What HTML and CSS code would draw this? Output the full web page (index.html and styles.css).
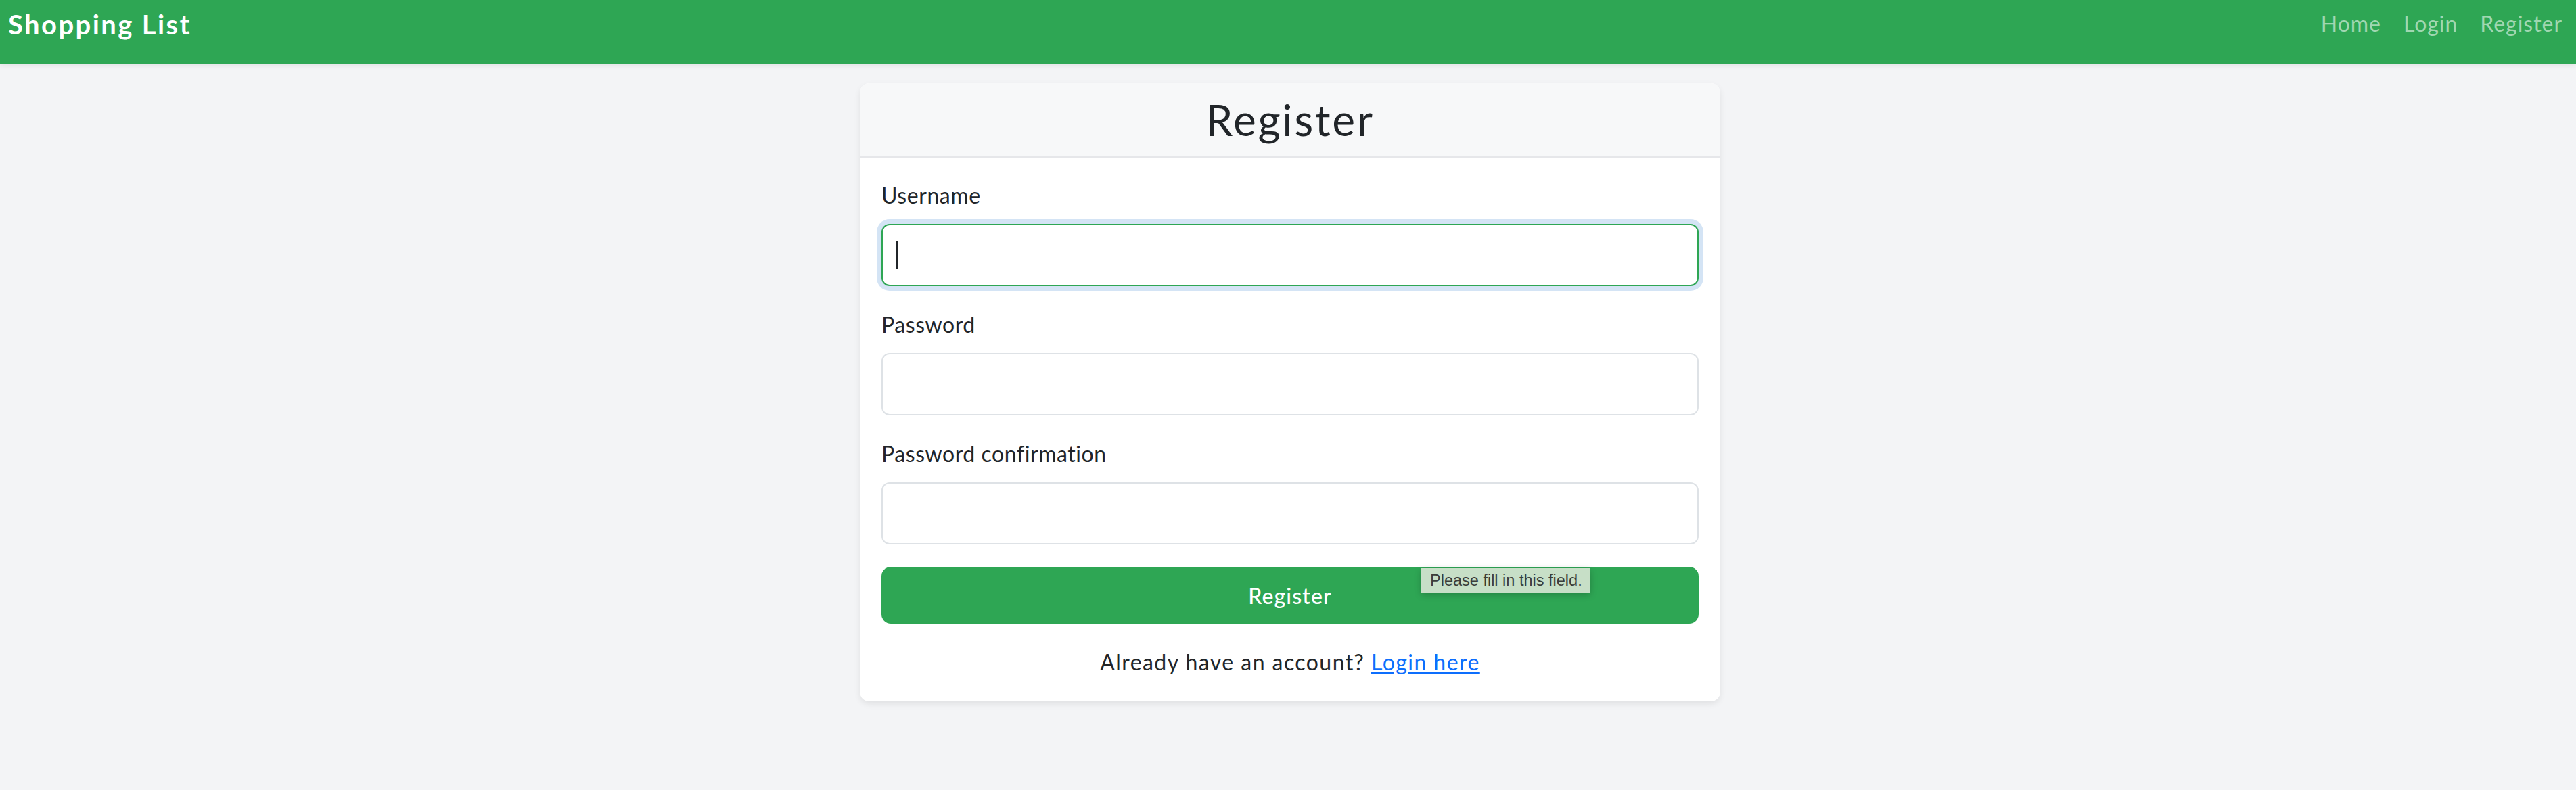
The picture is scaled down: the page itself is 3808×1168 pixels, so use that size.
FILE: index.html
```html
<!DOCTYPE html>
<html lang="en">
<head>
<meta charset="utf-8">
<title>Register - Shopping List</title>
<link rel="stylesheet" href="styles.css">
</head>
<body>
<nav class="navbar">
  <a class="brand" href="#">Shopping List</a>
  <ul class="nav-links">
    <li><a href="#">Home</a></li>
    <li><a href="#">Login</a></li>
    <li><a href="#">Register</a></li>
  </ul>
</nav>
<main class="main">
  <div class="card">
    <div class="card-header"><h2 class="card-title">Register</h2></div>
    <div class="card-body">
      <form class="form">
        <div class="field">
          <label class="label" for="username">Username</label>
          <div class="input-wrap">
            <input class="input input-focus" id="username" type="text">
            <span class="caret"></span>
          </div>
        </div>
        <div class="field">
          <label class="label" for="password">Password</label>
          <div class="input-wrap"><input class="input" id="password" type="password"></div>
        </div>
        <div class="field">
          <label class="label" for="password2">Password confirmation</label>
          <div class="input-wrap"><input class="input" id="password2" type="password"></div>
        </div>
        <div class="btn-wrap">
          <button class="btn" type="button">Register</button>
          <div class="tooltip">Please fill in this field.</div>
        </div>
      </form>
      <p class="alt">Already have an account? <a class="link" href="#">Login here</a></p>
    </div>
  </div>
</main>
</body>
</html>
```

FILE: styles.css
```css
* { box-sizing: border-box; }
html, body { margin: 0; padding: 0; }
body {
  background: #f3f4f6;
  font-family: "Lato", "Noto Sans", sans-serif;
  color: #212529;
  width: 3808px;
  height: 1168px;
  overflow: hidden;
  letter-spacing: 0.035em;
}
.navbar {
  height: 94px;
  background: #2ea654;
  display: flex;
  justify-content: space-between;
  align-items: flex-start;
  padding: 0 20px 0 12px;
  box-shadow: 0 3px 8px rgba(0, 0, 0, 0.08);
  position: relative;
}
.brand {
  color: #ffffff;
  text-decoration: none;
  font-weight: 700;
  font-size: 40px;
  line-height: 60px;
  margin-top: 6px;
  letter-spacing: 0.06em;
}
.nav-links {
  list-style: none;
  margin: 11px 0 0 0;
  padding: 0;
  display: flex;
  gap: 33px;
}
.nav-links a {
  color: #a0d7b1;
  text-decoration: none;
  font-size: 32px;
  line-height: 48px;
  letter-spacing: 0.03em;
}
.main {
  padding-top: 29px;
  padding-left: 6px;
}
.card {
  width: 1272px;
  margin: 0 auto;
  background: #ffffff;
  border-radius: 14px;
  box-shadow: 0 4px 10px rgba(0, 0, 0, 0.08);
  overflow: hidden;
}
.card-header {
  background: #f7f8f9;
  border-bottom: 2px solid #e6e7ea;
  padding: 16px 32px;
  height: 110px;
}
.card-title {
  margin: 0;
  text-align: center;
  font-size: 64px;
  font-weight: 400;
  line-height: 76px;
  letter-spacing: 0.042em;
}
.card-body {
  padding: 32px 32px 34px;
}
.form { margin: 0; }
.field { margin-bottom: 33px; }
.label {
  display: block;
  font-size: 32px;
  line-height: 48px;
  margin-bottom: 18px;
}
.input-wrap { position: relative; }
.input {
  display: block;
  width: 100%;
  height: 92px;
  border: 2px solid #dee2e6;
  border-radius: 12px;
  background: #ffffff;
  font-size: 32px;
  padding: 0 22px;
  outline: none;
}
.input-focus {
  border-color: #2ea654;
  box-shadow: 0 0 0 7px #d4e4f5;
}
.caret {
  position: absolute;
  left: 22px;
  top: 26px;
  width: 2px;
  height: 40px;
  background: #212529;
}
.btn-wrap { position: relative; }
.btn {
  display: block;
  width: 100%;
  height: 84px;
  border: none;
  border-radius: 14px;
  background: #2ea654;
  color: #ffffff;
  font-family: "Lato", "Noto Sans", sans-serif;
  font-size: 32px;
  font-weight: 500;
  letter-spacing: 0.035em;
}
.tooltip {
  position: absolute;
  top: 2px;
  left: 798px;
  height: 36px;
  line-height: 36px;
  padding: 0 12px 0 13px;
  background: #c7dfc7;
  color: #3a3d3a;
  font-family: "Liberation Sans", Arial, sans-serif;
  font-size: 23.5px;
  letter-spacing: 0;
  box-shadow: 0 3px 10px rgba(0, 0, 0, 0.22);
  white-space: nowrap;
}
.alt {
  margin: 33px 0 0 0;
  text-align: center;
  font-size: 32px;
  line-height: 48px;
  letter-spacing: 0.045em;
}
.link { color: #0d6efd; }
```
